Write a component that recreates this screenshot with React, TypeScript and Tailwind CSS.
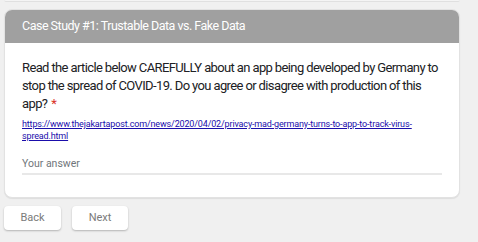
export default function App() {
  return (
    <div
      className="w-[478px] h-[242px] bg-[#f0f0f0] overflow-hidden pl-1"
      style={{ fontFamily: "Roboto, 'Liberation Sans', sans-serif" }}
    >
      {/* tail of the previous card */}
      <div className="w-[456px] h-[2px] bg-[#f4f4f4] border-b border-[#e0e0e0] rounded-b-md" />

      <div className="mt-[7px] w-[456px] bg-white rounded-lg border border-[#e2e2e2] shadow-[0_1px_1px_rgba(0,0,0,0.08)] overflow-hidden">
        <div className="h-[33px] bg-[#a0a0a0] flex items-center px-[17px] text-white text-[12.5px] tracking-[-0.5px]">
          Case Study #1: Trustable Data vs. Fake Data
        </div>
        <div className="px-[17px] pt-[16px] pb-[22px]">
          <p className="text-[13px] leading-[18px] tracking-[-0.62px] text-[#202124]">
            Read the article below CAREFULLY about an app being developed by Germany to stop the
            spread of COVID-19. Do you agree or disagree with production of this app?
            <span className="inline-block ml-[4px] tracking-normal leading-none text-[#d93025]">*</span>
          </p>
          <a
            href="#"
            className="block mt-[5px] text-[9px] leading-[12px] tracking-[-0.15px] text-[#1a0dab] underline"
          >
            https://www.thejakartapost.com/news/2020/04/02/privacy-mad-germany-turns-to-app-to-track-virus-spread.html
          </a>
          <div className="mt-[14px] w-[420px] border-b-2 border-[#e8e8e8] pb-[2px] text-[10.5px] leading-[15px] text-[#70757a]">
            Your answer
          </div>
        </div>
      </div>

      <div className="mt-[8px] flex gap-[11px]">
        <button className="w-[57px] h-[24px] bg-white rounded-[4px] shadow-[0_1px_2px_rgba(0,0,0,0.25)] text-[11px] text-[#7a7a7a]">
          Back
        </button>
        <button className="w-[56px] h-[24px] bg-white rounded-[4px] shadow-[0_1px_2px_rgba(0,0,0,0.25)] text-[11px] text-[#7a7a7a]">
          Next
        </button>
      </div>
    </div>
  );
}
